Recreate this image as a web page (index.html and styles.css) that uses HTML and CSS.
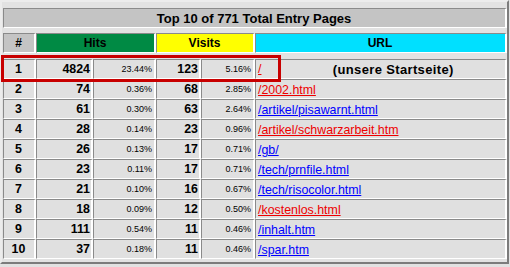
FILE: index.html
```html
<!DOCTYPE html>
<html>
<head>
<meta charset="utf-8">
<link rel="stylesheet" href="styles.css">
</head>
<body>
<div class="wrap">
<table class="stats">
  <colgroup>
    <col class="c-rank"><col class="c-hits"><col class="c-hpct"><col class="c-vis"><col class="c-vpct"><col class="c-url">
  </colgroup>
  <tr class="title-row"><td colspan="6" class="title">Top 10 of 771 Total Entry Pages</td></tr>
  <tr class="spacer s1"><td colspan="6"></td></tr>
  <tr class="head">
    <td class="h-rank">#</td>
    <td colspan="2" class="h-hits">Hits</td>
    <td colspan="2" class="h-visits">Visits</td>
    <td class="h-url">URL</td>
  </tr>
  <tr class="spacer s2"><td colspan="6"></td></tr>
  <tr><td class="rank">1</td><td class="num">4824</td><td class="pct">23.44%</td><td class="num">123</td><td class="pct">5.16%</td><td class="url"><div class="url-flex"><a class="red" href="#">/</a><span class="home">(unsere Startseite)</span></div></td></tr>
  <tr><td class="rank">2</td><td class="num">74</td><td class="pct">0.36%</td><td class="num">68</td><td class="pct">2.85%</td><td class="url"><a class="red" href="#">/2002.html</a></td></tr>
  <tr><td class="rank">3</td><td class="num">61</td><td class="pct">0.30%</td><td class="num">63</td><td class="pct">2.64%</td><td class="url"><a class="blue" href="#">/artikel/pisawarnt.html</a></td></tr>
  <tr><td class="rank">4</td><td class="num">28</td><td class="pct">0.14%</td><td class="num">23</td><td class="pct">0.96%</td><td class="url"><a class="red" href="#">/artikel/schwarzarbeit.htm</a></td></tr>
  <tr><td class="rank">5</td><td class="num">26</td><td class="pct">0.13%</td><td class="num">17</td><td class="pct">0.71%</td><td class="url"><a class="blue" href="#">/gb/</a></td></tr>
  <tr><td class="rank">6</td><td class="num">23</td><td class="pct">0.11%</td><td class="num">17</td><td class="pct">0.71%</td><td class="url"><a class="blue" href="#">/tech/prnfile.html</a></td></tr>
  <tr><td class="rank">7</td><td class="num">21</td><td class="pct">0.10%</td><td class="num">16</td><td class="pct">0.67%</td><td class="url"><a class="blue" href="#">/tech/risocolor.html</a></td></tr>
  <tr><td class="rank">8</td><td class="num">18</td><td class="pct">0.09%</td><td class="num">12</td><td class="pct">0.50%</td><td class="url"><a class="red" href="#">/kostenlos.html</a></td></tr>
  <tr><td class="rank">9</td><td class="num">111</td><td class="pct">0.54%</td><td class="num">11</td><td class="pct">0.46%</td><td class="url"><a class="blue" href="#">/inhalt.htm</a></td></tr>
  <tr><td class="rank">10</td><td class="num">37</td><td class="pct">0.18%</td><td class="num">11</td><td class="pct">0.46%</td><td class="url"><a class="blue" href="#">/spar.htm</a></td></tr>
</table>
<div class="highlight"></div>
</div>
</body>
</html>
```
FILE: styles.css
```css
html, body {
  margin: 0;
  padding: 0;
  background: #e2e2e2;
}
body {
  font-family: "Liberation Sans", Arial, sans-serif;
  width: 510px;
  height: 267px;
  overflow: hidden;
}
.wrap {
  position: relative;
}
.stats {
  table-layout: fixed;
  border-collapse: separate;
  border-spacing: 0;
  width: 509px;
  box-sizing: border-box;
  background: #e2e2e2;
  border-style: solid;
  border-width: 2px;
  border-color: #ececec #7c7c7c #7c7c7c #ececec;
  padding: 6px 0 3px 1px;
}
.c-rank { width: 33px; }
.c-hits { width: 57px; }
.c-hpct { width: 63px; }
.c-vis { width: 45px; }
.c-vpct { width: 54px; }
.c-url { width: 252px; }

.stats td {
  box-sizing: border-box;
  height: 20px;
  padding: 0 2px 0 1px;
  border-style: solid;
  border-width: 1px 2px 1px 1px;
  border-color: #8a8a8a #ffffff #ffffff #8a8a8a;
  background: #e0e0e0;
  vertical-align: middle;
  white-space: nowrap;
  overflow: hidden;
}
.stats tr.spacer td {
  border: 0;
  padding: 0;
  background: transparent;
}
.stats tr.s1 td { height: 5px; }
.stats tr.s2 td { height: 6px; }

.stats td.title {
  background: #c4c4c4;
  text-align: center;
  font-weight: bold;
  font-size: 13px;
  color: #000;
}
.head td {
  text-align: center;
  font-weight: bold;
  font-size: 12px;
  color: #000;
}
.stats td.h-rank { background: #c4c4c4; }
.stats td.h-hits { background: #008a44; }
.stats td.h-visits { background: #ffff00; }
.stats td.h-url { background: #00e0ff; }

.rank {
  text-align: center;
  font-weight: bold;
  font-size: 12.4px;
}
.num {
  text-align: right;
  font-weight: bold;
  font-size: 12.4px;
}
.stats td.num { padding-right: 1px; }
.pct {
  text-align: right;
  font-size: 9px;
}
.stats td.url { padding-left: 2px; }
.url a {
  font-size: 12.4px;
  text-decoration: underline;
}
a.red { color: #ee0000; }
a.blue { color: #0000ff; }
.url-flex {
  display: flex;
  align-items: center;
}
.home {
  flex: 1;
  text-align: center;
  font-weight: bold;
  font-size: 13px;
  letter-spacing: 0.35px;
  margin-left: 22px;
}
.highlight {
  position: absolute;
  left: 1px;
  top: 55px;
  width: 280px;
  height: 27px;
  box-sizing: border-box;
  border: 3px solid #c80000;
}
```
